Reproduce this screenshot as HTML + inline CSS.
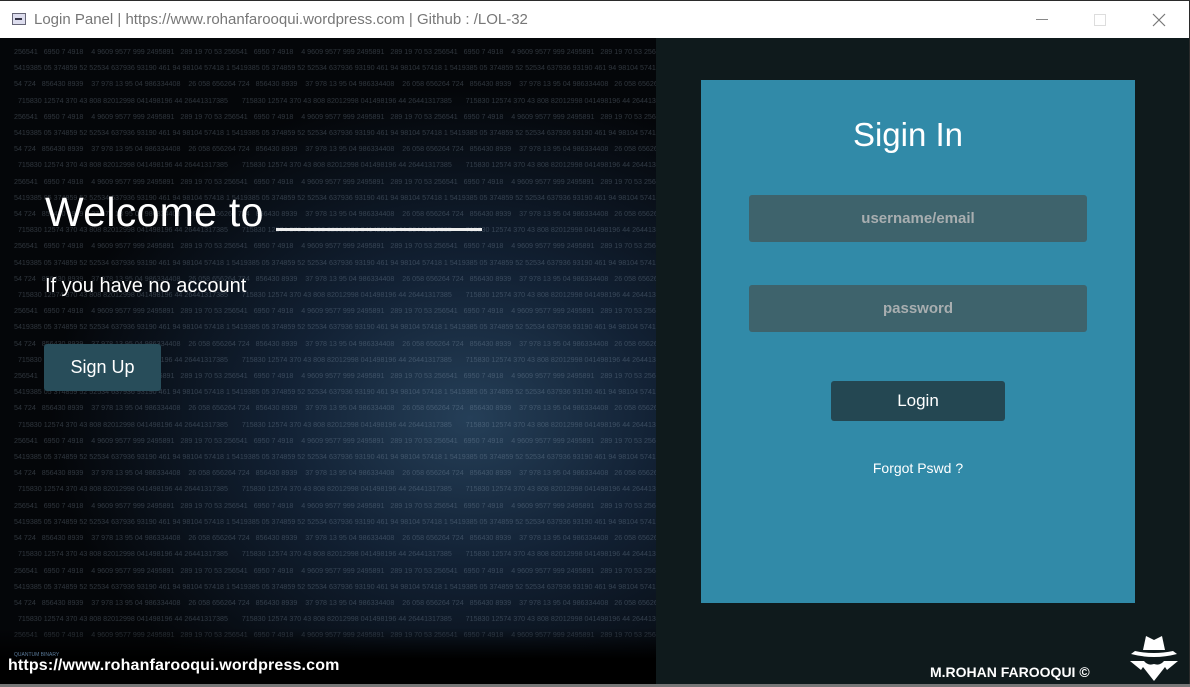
<!DOCTYPE html>
<html><head><meta charset="utf-8"><style>
*{margin:0;padding:0;box-sizing:border-box}
body{width:1190px;height:687px;overflow:hidden;background:#2b2b2b;font-family:"Liberation Sans",sans-serif;position:relative}
#title{position:absolute;left:0;top:1px;width:1189px;height:37px;background:#fff}
#title .t{position:absolute;left:34px;top:10px;font-size:15px;color:#777}
#left{position:absolute;left:0;top:38px;width:656px;height:646px;overflow:hidden;
background:radial-gradient(ellipse 420px 330px at 470px 380px,#253f58 0%,#122134 45%,#040609 100%)}
#nums{position:absolute;left:14px;top:6px;font-family:"Liberation Sans Narrow","Liberation Sans",sans-serif;font-size:7.5px;line-height:16.2px;color:rgba(170,190,210,.26);white-space:pre;transform:scaleX(.95);transform-origin:0 0}
#right{position:absolute;left:656px;top:38px;width:533px;height:646px;background:#0f1a1c}
#card{position:absolute;left:701px;top:80px;width:434px;height:523px;background:#318aa8}
.in{position:absolute;left:48px;width:338px;height:47px;background:#3e636c;border-radius:3px;color:#a8aeb0;font-weight:bold;font-size:15px;text-align:center;line-height:47px}
</style></head><body>
<div id="title"><svg style="position:absolute;left:12px;top:12px" width="14" height="12"><rect x=".5" y=".5" width="13" height="11" fill="#dde" stroke="#667"/><rect x="3" y="5" width="7" height="2" fill="#334"/></svg><span class="t">Login Panel | https://www.rohanfarooqui.wordpress.com | Github : /LOL-32</span>
<div style="position:absolute;left:1036px;top:18px;width:12px;height:1px;background:#888"></div>
<div style="position:absolute;left:1094px;top:13px;width:12px;height:12px;border:1px solid #ddd"></div>
<svg style="position:absolute;left:1152px;top:12px" width="14" height="14"><path d="M1 1L13 13M13 1L1 13" stroke="#777" stroke-width="1.2"/></svg></div>
<div id="left"><div id="nums">256541   6950 7 4918    4 9609 9577 999 2495891   289 19 70 53 256541   6950 7 4918    4 9609 9577 999 2495891   289 19 70 53 256541   6950 7 4918    4 9609 9577 999 2495891   289 19 70 53 256541  6950 7 4918
5419385 05 374859 52 52534 637936 93190 461 94 98104 57418 1 5419385 05 374859 52 52534 637936 93190 461 94 98104 57418 1 5419385 05 374859 52 52534 637936 93190 461 94 98104 57418 1 5419385 05 374859
54 724   856430 8939    37 978 13 95 04 986334408    26 058 656264 724   856430 8939    37 978 13 95 04 986334408    26 058 656264 724   856430 8939    37 978 13 95 04 986334408   26 058 656264 724
  715830 12574 370 43 808 82012998 041498196 44 26441317385       715830 12574 370 43 808 82012998 041498196 44 26441317385       715830 12574 370 43 808 82012998 041498196 44 26441317385
256541   6950 7 4918    4 9609 9577 999 2495891   289 19 70 53 256541   6950 7 4918    4 9609 9577 999 2495891   289 19 70 53 256541   6950 7 4918    4 9609 9577 999 2495891   289 19 70 53 256541  6950 7 4918
5419385 05 374859 52 52534 637936 93190 461 94 98104 57418 1 5419385 05 374859 52 52534 637936 93190 461 94 98104 57418 1 5419385 05 374859 52 52534 637936 93190 461 94 98104 57418 1 5419385 05 374859
54 724   856430 8939    37 978 13 95 04 986334408    26 058 656264 724   856430 8939    37 978 13 95 04 986334408    26 058 656264 724   856430 8939    37 978 13 95 04 986334408   26 058 656264 724
  715830 12574 370 43 808 82012998 041498196 44 26441317385       715830 12574 370 43 808 82012998 041498196 44 26441317385       715830 12574 370 43 808 82012998 041498196 44 26441317385
256541   6950 7 4918    4 9609 9577 999 2495891   289 19 70 53 256541   6950 7 4918    4 9609 9577 999 2495891   289 19 70 53 256541   6950 7 4918    4 9609 9577 999 2495891   289 19 70 53 256541  6950 7 4918
5419385 05 374859 52 52534 637936 93190 461 94 98104 57418 1 5419385 05 374859 52 52534 637936 93190 461 94 98104 57418 1 5419385 05 374859 52 52534 637936 93190 461 94 98104 57418 1 5419385 05 374859
54 724   856430 8939    37 978 13 95 04 986334408    26 058 656264 724   856430 8939    37 978 13 95 04 986334408    26 058 656264 724   856430 8939    37 978 13 95 04 986334408   26 058 656264 724
  715830 12574 370 43 808 82012998 041498196 44 26441317385       715830 12574 370 43 808 82012998 041498196 44 26441317385       715830 12574 370 43 808 82012998 041498196 44 26441317385
256541   6950 7 4918    4 9609 9577 999 2495891   289 19 70 53 256541   6950 7 4918    4 9609 9577 999 2495891   289 19 70 53 256541   6950 7 4918    4 9609 9577 999 2495891   289 19 70 53 256541  6950 7 4918
5419385 05 374859 52 52534 637936 93190 461 94 98104 57418 1 5419385 05 374859 52 52534 637936 93190 461 94 98104 57418 1 5419385 05 374859 52 52534 637936 93190 461 94 98104 57418 1 5419385 05 374859
54 724   856430 8939    37 978 13 95 04 986334408    26 058 656264 724   856430 8939    37 978 13 95 04 986334408    26 058 656264 724   856430 8939    37 978 13 95 04 986334408   26 058 656264 724
  715830 12574 370 43 808 82012998 041498196 44 26441317385       715830 12574 370 43 808 82012998 041498196 44 26441317385       715830 12574 370 43 808 82012998 041498196 44 26441317385
256541   6950 7 4918    4 9609 9577 999 2495891   289 19 70 53 256541   6950 7 4918    4 9609 9577 999 2495891   289 19 70 53 256541   6950 7 4918    4 9609 9577 999 2495891   289 19 70 53 256541  6950 7 4918
5419385 05 374859 52 52534 637936 93190 461 94 98104 57418 1 5419385 05 374859 52 52534 637936 93190 461 94 98104 57418 1 5419385 05 374859 52 52534 637936 93190 461 94 98104 57418 1 5419385 05 374859
54 724   856430 8939    37 978 13 95 04 986334408    26 058 656264 724   856430 8939    37 978 13 95 04 986334408    26 058 656264 724   856430 8939    37 978 13 95 04 986334408   26 058 656264 724
  715830 12574 370 43 808 82012998 041498196 44 26441317385       715830 12574 370 43 808 82012998 041498196 44 26441317385       715830 12574 370 43 808 82012998 041498196 44 26441317385
256541   6950 7 4918    4 9609 9577 999 2495891   289 19 70 53 256541   6950 7 4918    4 9609 9577 999 2495891   289 19 70 53 256541   6950 7 4918    4 9609 9577 999 2495891   289 19 70 53 256541  6950 7 4918
5419385 05 374859 52 52534 637936 93190 461 94 98104 57418 1 5419385 05 374859 52 52534 637936 93190 461 94 98104 57418 1 5419385 05 374859 52 52534 637936 93190 461 94 98104 57418 1 5419385 05 374859
54 724   856430 8939    37 978 13 95 04 986334408    26 058 656264 724   856430 8939    37 978 13 95 04 986334408    26 058 656264 724   856430 8939    37 978 13 95 04 986334408   26 058 656264 724
  715830 12574 370 43 808 82012998 041498196 44 26441317385       715830 12574 370 43 808 82012998 041498196 44 26441317385       715830 12574 370 43 808 82012998 041498196 44 26441317385
256541   6950 7 4918    4 9609 9577 999 2495891   289 19 70 53 256541   6950 7 4918    4 9609 9577 999 2495891   289 19 70 53 256541   6950 7 4918    4 9609 9577 999 2495891   289 19 70 53 256541  6950 7 4918
5419385 05 374859 52 52534 637936 93190 461 94 98104 57418 1 5419385 05 374859 52 52534 637936 93190 461 94 98104 57418 1 5419385 05 374859 52 52534 637936 93190 461 94 98104 57418 1 5419385 05 374859
54 724   856430 8939    37 978 13 95 04 986334408    26 058 656264 724   856430 8939    37 978 13 95 04 986334408    26 058 656264 724   856430 8939    37 978 13 95 04 986334408   26 058 656264 724
  715830 12574 370 43 808 82012998 041498196 44 26441317385       715830 12574 370 43 808 82012998 041498196 44 26441317385       715830 12574 370 43 808 82012998 041498196 44 26441317385
256541   6950 7 4918    4 9609 9577 999 2495891   289 19 70 53 256541   6950 7 4918    4 9609 9577 999 2495891   289 19 70 53 256541   6950 7 4918    4 9609 9577 999 2495891   289 19 70 53 256541  6950 7 4918
5419385 05 374859 52 52534 637936 93190 461 94 98104 57418 1 5419385 05 374859 52 52534 637936 93190 461 94 98104 57418 1 5419385 05 374859 52 52534 637936 93190 461 94 98104 57418 1 5419385 05 374859
54 724   856430 8939    37 978 13 95 04 986334408    26 058 656264 724   856430 8939    37 978 13 95 04 986334408    26 058 656264 724   856430 8939    37 978 13 95 04 986334408   26 058 656264 724
  715830 12574 370 43 808 82012998 041498196 44 26441317385       715830 12574 370 43 808 82012998 041498196 44 26441317385       715830 12574 370 43 808 82012998 041498196 44 26441317385
256541   6950 7 4918    4 9609 9577 999 2495891   289 19 70 53 256541   6950 7 4918    4 9609 9577 999 2495891   289 19 70 53 256541   6950 7 4918    4 9609 9577 999 2495891   289 19 70 53 256541  6950 7 4918
5419385 05 374859 52 52534 637936 93190 461 94 98104 57418 1 5419385 05 374859 52 52534 637936 93190 461 94 98104 57418 1 5419385 05 374859 52 52534 637936 93190 461 94 98104 57418 1 5419385 05 374859
54 724   856430 8939    37 978 13 95 04 986334408    26 058 656264 724   856430 8939    37 978 13 95 04 986334408    26 058 656264 724   856430 8939    37 978 13 95 04 986334408   26 058 656264 724
  715830 12574 370 43 808 82012998 041498196 44 26441317385       715830 12574 370 43 808 82012998 041498196 44 26441317385       715830 12574 370 43 808 82012998 041498196 44 26441317385
256541   6950 7 4918    4 9609 9577 999 2495891   289 19 70 53 256541   6950 7 4918    4 9609 9577 999 2495891   289 19 70 53 256541   6950 7 4918    4 9609 9577 999 2495891   289 19 70 53 256541  6950 7 4918</div>
<div style="position:absolute;left:0;top:590px;width:656px;height:56px;background:linear-gradient(transparent,#000 55%)"></div>
<div style="position:absolute;left:45px;top:151px;font-size:41px;color:#fff;line-height:46px;letter-spacing:0.3px">Welcome to</div>
<div style="position:absolute;left:276px;top:190px;width:206px;height:3px;background:#eee"></div>
<div style="position:absolute;left:45px;top:237px;font-size:20px;color:#fff">If you have no account</div>
<div style="position:absolute;left:44px;top:306px;width:117px;height:47px;background:#284d5a;border-radius:3px;color:#fff;font-size:18px;text-align:center;line-height:47px">Sign Up</div>
<div style="position:absolute;left:14px;top:614px;font-size:5px;color:#5a7a99">QUANTUM BINARY</div>
<div style="position:absolute;left:8px;top:619px;font-size:16px;font-weight:bold;color:#fff;letter-spacing:0.15px">https://www.rohanfarooqui.wordpress.com</div>
</div>
<div id="right"></div>
<div id="card">
<div style="position:absolute;left:-10px;width:100%;top:36px;text-align:center;color:#fff;font-size:33px">Sigin In</div>
<div class="in" style="top:115px">username/email</div>
<div class="in" style="top:205px">password</div>
<div style="position:absolute;left:130px;top:301px;width:174px;height:40px;background:#244752;border-radius:3px;color:#fff;font-size:17px;text-align:center;line-height:40px">Login</div>
<div style="position:absolute;left:0;width:100%;top:380px;text-align:center;color:#fff;font-size:14px">Forgot Pswd ?</div>
</div>
<div style="position:absolute;left:930px;top:664px;font-size:14px;font-weight:bold;color:#fff">M.ROHAN FAROOQUI ©</div>
<svg style="position:absolute;left:1125px;top:634px" width="58" height="50" viewBox="0 0 58 50"><path d="M21 2L29 6L37 2L40 16H18Z M10 17Q29 21 48 17L52 20Q29 26 6 20Z M5 27L19 27Q23 32 29 30Q35 32 39 27L53 27L42 36L40 33L29 47L18 33L16 36Z" fill="#fff"/></svg>
<div style="position:absolute;left:0;top:684px;width:1190px;height:3px;background:#777"></div>
</body></html>
